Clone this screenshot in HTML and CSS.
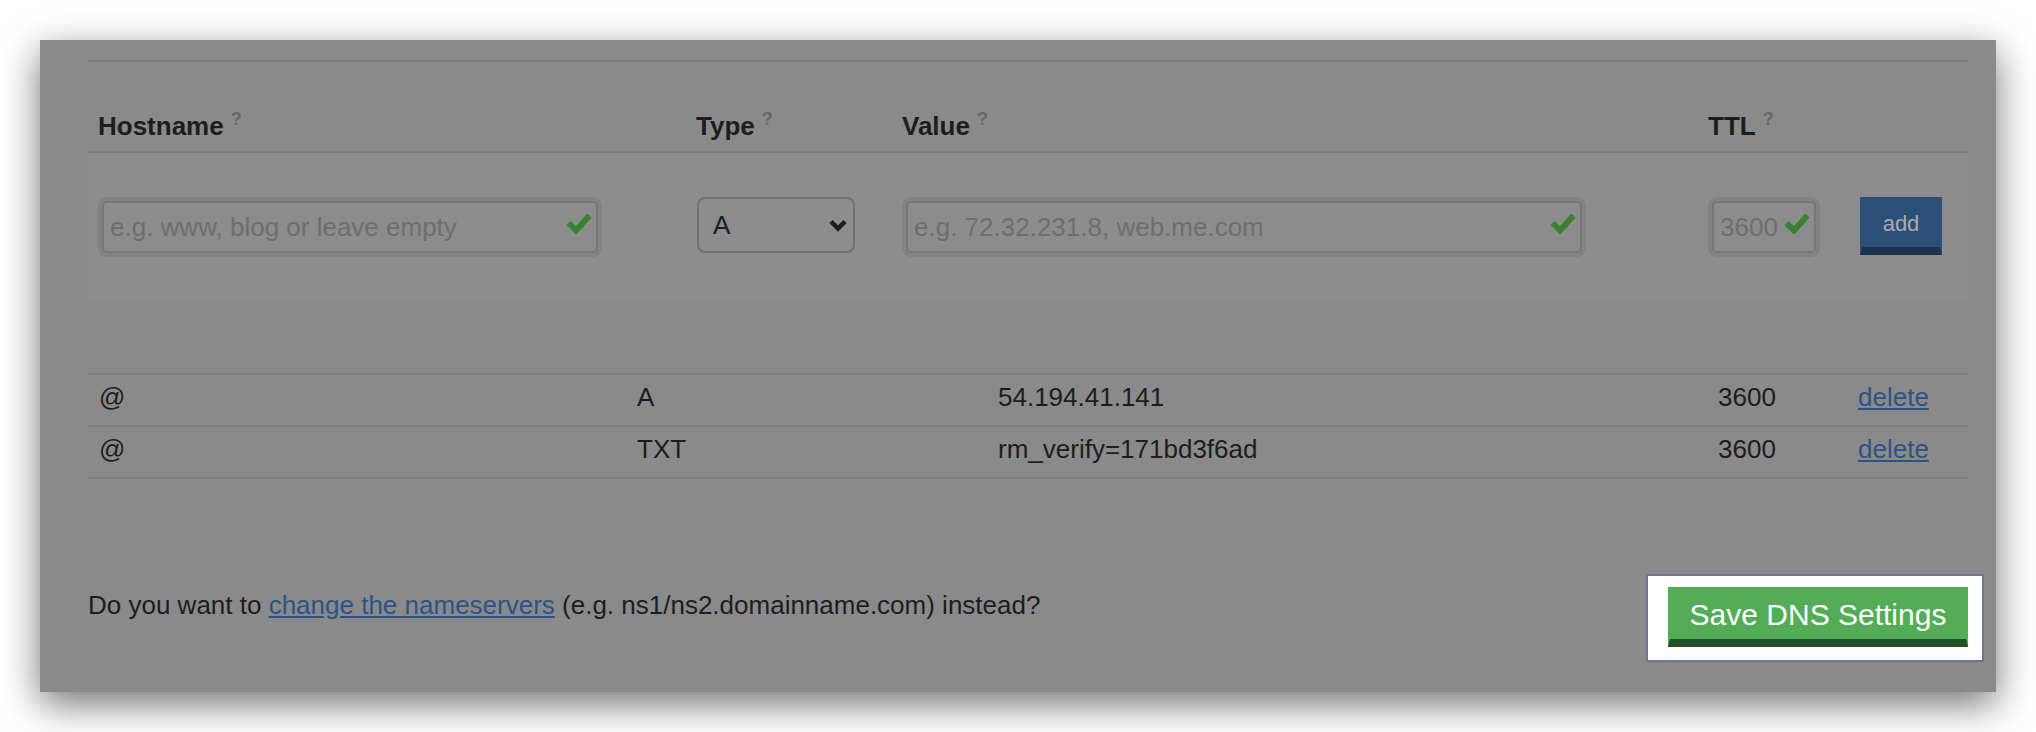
FILE: index.html
```html
<!DOCTYPE html>
<html lang="en">
<head>
<meta charset="utf-8">
<title>DNS Settings</title>
<link rel="stylesheet" href="styles.css">
</head>
<body>
<div class="panel">
  <div class="form">
    <div class="form-head">
      <div class="label">Hostname<sup class="help">?</sup></div>
      <div class="label">Type<sup class="help">?</sup></div>
      <div class="label">Value<sup class="help">?</sup></div>
      <div class="label">TTL<sup class="help">?</sup></div>
      <div></div>
    </div>
    <div class="form-row">
      <div class="field field-host">
        <input class="text-input" type="text" placeholder="e.g. www, blog or leave empty">
        <svg class="check" viewBox="0 0 26 22" width="26" height="22"><polyline points="2.5,11 10,18.5 23.5,3.5" fill="none" stroke="#398232" stroke-width="6"/></svg>
      </div>
      <div class="select-wrap">
        <select class="type-select"><option>A</option></select>
        <svg class="chevron" viewBox="0 0 18 13" width="18" height="13"><polyline points="2,2.5 9,9.5 16,2.5" fill="none" stroke="#1d1d1d" stroke-width="4.5"/></svg>
      </div>
      <div class="field field-value">
        <input class="text-input" type="text" placeholder="e.g. 72.32.231.8, web.me.com">
        <svg class="check" viewBox="0 0 26 22" width="26" height="22"><polyline points="2.5,11 10,18.5 23.5,3.5" fill="none" stroke="#398232" stroke-width="6"/></svg>
      </div>
      <div class="field field-ttl">
        <input class="text-input" type="text" placeholder="3600">
        <svg class="check" viewBox="0 0 26 22" width="26" height="22"><polyline points="2.5,11 10,18.5 23.5,3.5" fill="none" stroke="#398232" stroke-width="6"/></svg>
      </div>
      <div><button class="btn-add" type="button">add</button></div>
    </div>
  </div>

  <div class="records">
    <div class="record">
      <div>@</div>
      <div>A</div>
      <div>54.194.41.141</div>
      <div>3600</div>
      <div><a class="link" href="#">delete</a></div>
    </div>
    <div class="record">
      <div>@</div>
      <div>TXT</div>
      <div>rm_verify=171bd3f6ad</div>
      <div>3600</div>
      <div><a class="link" href="#">delete</a></div>
    </div>
  </div>

  <div class="footer">
    <p class="footer-text">Do you want to <a class="link" href="#">change the nameservers</a> (e.g. ns1/ns2.domainname.com) instead?</p>
    <div class="save-wrap">
      <button class="btn-save" type="button">Save DNS Settings</button>
    </div>
  </div>
</div>
</body>
</html>
```

FILE: styles.css
```css
* { box-sizing: border-box; }

html, body {
  margin: 0;
  padding: 0;
  background: #ffffff;
}

body {
  font-family: "Liberation Sans", Arial, Helvetica, sans-serif;
  font-size: 26px;
  line-height: 30px;
  color: #1d1d1d;
  overflow: hidden;
}

.panel {
  margin: 40px;
  padding: 20px 28px 45px 48px;
  background: #8a8a8a;
  box-shadow: 0 12px 36px rgba(0, 0, 0, 0.55);
}

.form {
  border-top: 2px solid #7f7f7f;
}

.form-head,
.form-row {
  display: grid;
  grid-template-columns: 598px 206px 806px 152px 1fr;
  padding-left: 10px;
}

.form-head {
  padding-top: 49px;
  padding-bottom: 10px;
  border-bottom: 2px solid #7f7f7f;
}

.label {
  font-weight: bold;
  color: #1d1d1d;
  white-space: nowrap;
}

.help {
  font-size: 18px;
  line-height: 0;
  font-weight: bold;
  color: #676767;
  vertical-align: 10px;
  margin-left: 7px;
}

.form-row {
  background: #8d8d8d;
  padding-top: 44px;
  padding-bottom: 43px;
  align-items: start;
}

.field {
  position: relative;
  margin: 4px 0 4px 4px;
  height: 52px;
}

.field-host { width: 496px; }
.field-value { width: 676px; }
.field-ttl { width: 104px; }

.text-input {
  display: block;
  width: 100%;
  height: 52px;
  margin: 0;
  padding: 0 6px;
  font-family: inherit;
  font-size: 26px;
  color: #1d1d1d;
  background: #8c8c8c;
  border: 2px solid #777777;
  border-radius: 5px;
  box-shadow: 0 0 0 4px #828282;
  outline: none;
}

.text-input::placeholder {
  color: #6e6e6e;
  opacity: 1;
}

.check {
  position: absolute;
  top: 11px;
  right: 6px;
}

.select-wrap {
  position: relative;
  margin-left: 1px;
  width: 158px;
  height: 56px;
}

.type-select {
  -webkit-appearance: none;
  appearance: none;
  display: block;
  width: 158px;
  height: 56px;
  margin: 0;
  padding: 0 0 0 14px;
  font-family: inherit;
  font-size: 26px;
  color: #1d1d1d;
  background: #8c8c8c;
  border: 2px solid #727272;
  border-radius: 8px;
  outline: none;
}

.chevron {
  position: absolute;
  top: 22px;
  right: 8px;
  pointer-events: none;
}

.btn-add {
  display: block;
  width: 82px;
  height: 58px;
  margin: 0;
  padding: 3px 0 0 0;
  font-family: inherit;
  font-size: 22px;
  color: #a6abb2;
  background: #2c4f78;
  border: 0;
  border-left: 2px solid #2c4f78;
  border-right: 2px solid #2c4f78;
  border-bottom: 8px solid #1c3350;
  border-radius: 0;
}

.records {
  margin-top: 73px;
  border-bottom: 2px solid #7f7f7f;
}

.record {
  display: grid;
  grid-template-columns: 538px 361px 720px 140px 1fr;
  padding: 7px 0 13px 11px;
  border-top: 2px solid #7f7f7f;
  color: #1d1d1d;
}

.link {
  color: #2d5384;
  text-decoration: underline;
}

.footer {
  margin-top: 108px;
  display: flex;
  justify-content: space-between;
  align-items: flex-start;
}

.footer-text {
  margin: 0;
  padding-top: 3px;
  color: #1d1d1d;
}

.save-wrap {
  position: relative;
}

.save-wrap::before {
  content: "";
  position: absolute;
  top: -13px;
  left: -22px;
  right: -16px;
  bottom: -15px;
  background: #ffffff;
  border: 2px solid #6f7586;
}

.btn-save {
  position: relative;
  display: block;
  width: 300px;
  height: 60px;
  margin: 0;
  padding: 4px 0 0 0;
  font-family: inherit;
  font-size: 30px;
  color: #ffffff;
  background: #52ad56;
  border: 0;
  border-left: 2px solid #52ad56;
  border-right: 2px solid #52ad56;
  border-bottom: 8px solid #1f5227;
  border-radius: 0;
}
```
